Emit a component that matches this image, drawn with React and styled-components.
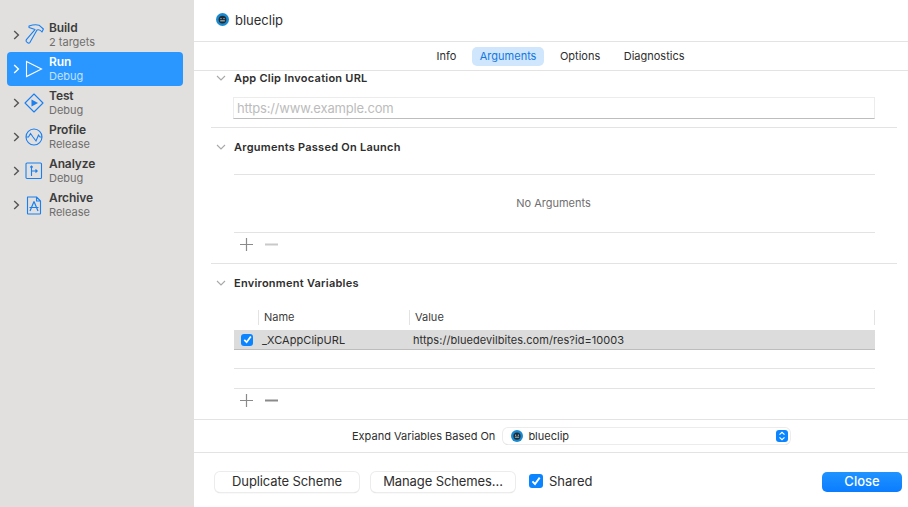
import React from "react";
import styled, { createGlobalStyle } from "styled-components";

const Global = createGlobalStyle`
  html, body { margin: 0; padding: 0; background: #fff; }
  body { font-family: Inter, "Liberation Sans", sans-serif; -webkit-font-smoothing: antialiased; }
  * { box-sizing: border-box; }
`;

const Page = styled.div`
  width: 908px; height: 507px; display: flex; overflow: hidden; background: #fff;
`;
const Sidebar = styled.aside`
  width: 194px; flex: none; background: #e1e0de; padding: 18px 11px 0 7px;
  display: flex; flex-direction: column;
`;
const SchemeRow = styled.div`
  height: 34px; display: flex; align-items: center; border-radius: 4px; padding-left: 6px;
  background: ${p => (p.$active ? "#2997ff" : "transparent")};
  color: ${p => (p.$active ? "#fff" : "#3c3c3c")};
`;
const IconSlot = styled.div`
  width: 20px; height: 20px; margin-left: 4px; margin-right: 5px; display: flex; align-items: center; justify-content: center; flex: none;
`;
const SchemeText = styled.div`
  display: flex; flex-direction: column; gap: 1px; margin-top: -1px;
`;
const SchemeName = styled.span`
  font-size: 12px; line-height: 15px; font-weight: 600; letter-spacing: -0.1px;
`;
const SchemeSub = styled.span`
  font-size: 11px; line-height: 13px; color: ${p => (p.$active ? "#c4e2ff" : "#6f6e6d")};
`;
const Main = styled.main`
  flex: 1; min-width: 0; display: flex; flex-direction: column;
`;
const Header = styled.header`
  height: 42px; border-bottom: 1px solid #e3e3e3; display: flex; align-items: center; padding: 0 0 2px 22px; gap: 6px;
  font-size: 13px; color: #2e2e2e;
`;
const Tabs = styled.nav`
  height: 29px; border-bottom: 1px solid #e3e3e3; display: flex; align-items: center; justify-content: center; gap: 0; padding-left: 19px;
`;
const Tab = styled.div`
  height: 19px; padding: 0 7.5px; margin: 0 4.25px; border-radius: 5px; display: flex; align-items: center; font-size: 11px;
  color: ${p => (p.$active ? "#1377e0" : "#2e2e2e")};
  background: ${p => (p.$active ? "#cfe6fd" : "transparent")};
`;
const Content = styled.div`
  flex: 1; padding: 0 11px 0 17px; display: flex; flex-direction: column;
`;
const Section = styled.section`
  height: ${p => p.$h}px; border-bottom: ${p => (p.$last ? "none" : "1px solid #e3e3e3")};
  display: flex; flex-direction: column; padding-right: 22px;
`;
const SectionHead = styled.div`
  display: flex; align-items: center; height: 14px; margin-top: ${p => p.$top}px; gap: 8px; padding-left: 5px;
  font-size: 11px; font-weight: 600; color: #2e2e2e; letter-spacing: 0.25px;
`;
const Body = styled.div`
  margin-left: 23px; display: flex; flex-direction: column;
`;
const UrlField = styled.div`
  height: 22px; margin-top: 12px; margin-left: -1px; border: 1px solid #ececec; border-bottom: 1px solid #bdbdbd; padding-left: 3px;
  display: flex; align-items: center; font-size: 13px; color: #bcbcbc; letter-spacing: -0.18px;
`;
const EmptyList = styled.div`
  height: 59px; margin-top: 20px; padding: 0 2px 2px 0; border-top: 1px solid #e3e3e3; border-bottom: 1px solid #e3e3e3;
  display: flex; align-items: center; justify-content: center; font-size: 11px; color: #6f6f6f;
`;
const AddRemove = styled.div`
  height: 22px; padding-left: 5px; display: flex; align-items: center; gap: 10px;
`;
const TableHead = styled.div`
  display: flex; height: 22px; margin-top: 18px; padding-bottom: 4px; align-items: center; font-size: 11px; color: #3c3c3c;
`;
const HeadCell = styled.div`
  width: ${p => p.$w}px; height: 15px; padding-left: ${p => (p.$bare ? 0 : 5)}px; line-height: 15px;
  border-left: ${p => (p.$bare ? "none" : "1px solid #e3e3e3")}; flex: ${p => (p.$w ? "none" : 1)};
  border-right: ${p => (p.$end ? "1px solid #e3e3e3" : "none")};
`;
const VarRow = styled.div`
  height: 20px; background: #dcdcdc; border-bottom: 1px solid #bdbdbd; display: flex; align-items: center; font-size: 11px; color: #2e2e2e; letter-spacing: 0.05px; padding-left: 7px;
`;
const BlankRow = styled.div`
  height: ${p => p.$h}px; border-bottom: 1px solid #e3e3e3;
`;
const Check = styled.span`
  width: ${p => p.$s}px; height: ${p => p.$s}px; border-radius: 3px; background: #0a84ff; display: inline-flex; align-items: center; justify-content: center; flex: none;
`;
const VarName = styled.span`
  width: 160px; padding-left: 9px; flex: none;
`;
const ExpandRow = styled.div`
  box-sizing: content-box; height: 32px; border-top: 1px solid #e3e3e3; border-bottom: 1px solid #e3e3e3; display: flex; align-items: center; font-size: 11px; color: #2e2e2e;
  padding-left: 158px; gap: 8px; flex: none;
`;
const Select = styled.div`
  width: 287px; height: 16px; border-radius: 5px; background: #fff; box-shadow: 0 0 0 1px #ececec, 0 1px 0 #bdbdbd;
  display: flex; align-items: center; padding: 0 2px 0 8px; gap: 5px;
`;
const SelectText = styled.span`flex: 1; color: #2e2e2e;`;
const Stepper = styled.span`
  width: 12px; height: 12px; background: #0a84ff; border-radius: 3px; display: flex; align-items: center; justify-content: center;
`;
const Footer = styled.footer`
  flex: 1; display: flex; align-items: center; padding: 4px 6px 0 21px;
`;
const Btn = styled.button`
  height: 20px; width: ${p => p.$w}px; margin-right: ${p => p.$mr || 0}px; border: none; border-radius: 5px; padding: 0 0 2px; font: inherit; font-size: 13px;
  line-height: 18px;
  letter-spacing: ${p => (p.$primary ? "0" : "-0.1px")};
  background: ${p => (p.$primary ? "linear-gradient(#1f94ff,#0a7cff)" : "#fff")};
  color: ${p => (p.$primary ? "#fff" : "#2e2e2e")};
  box-shadow: ${p => (p.$primary ? "none" : "0 0 0 1px #ececec, 0 1px 1px #c4c4c4")};
  ${p => (p.$primary ? "font-weight: 500;" : "")}
`;
const Shared = styled.label`
  display: flex; align-items: center; gap: 6px; font-size: 13px; color: #2e2e2e; flex: 1; padding-bottom: 2px;
`;

const Chevron = ({ light }) => (
  <svg width="7" height="10" viewBox="0 0 7 10" fill="none" stroke={light ? "#fff" : "#555"} strokeWidth="1.4" style={{ flex: "none" }}>
    <path d="M1.2 1 L5.4 5 L1.2 9" />
  </svg>
);
const Down = () => (
  <svg width="10" height="6" viewBox="0 0 10 6" fill="none" stroke="#a8a8a8" strokeWidth="1.1" style={{ flex: "none" }}>
    <path d="M1 1 L5 5 L9 1" />
  </svg>
);
const Tick = ({ s = 9 }) => (
  <svg width={s} height={s} viewBox="0 0 10 10" fill="none" stroke="#fff" strokeWidth="1.9">
    <path d="M1.4 5.4 L4 8 L8.7 1.6" />
  </svg>
);
const Plus = () => (
  <svg width="15" height="15" viewBox="0 0 15 15" stroke="#8a8a8a" strokeWidth="1.2"><path d="M1 7.5 H14 M7.5 1 V14" /></svg>
);
const Minus = ({ on }) => (
  <svg width="15" height="15" viewBox="0 0 15 15" stroke={on ? "#8a8a8a" : "#c9c9c9"} strokeWidth="2"><path d="M1 7.5 H14" /></svg>
);
const Blue = "#1a7ff0";
const Hammer = () => (
  <svg width="20" height="22" viewBox="0 0 20 22" fill="none" stroke={Blue} strokeWidth="1.1" strokeLinejoin="round" style={{ flex: "none" }}>
    <path d="M5 2 Q11 0 15 1.2 L19.4 5 L18 8 Q16 5 13 6 L6 18.3 Q5 19.6 3.6 18.7 L2.6 17.8 Q1.6 16.8 2.6 15.4 L11 5.6 L5 3.4 Z" />
  </svg>
);
const Play = ({ c }) => (
  <svg width="18" height="18" viewBox="0 0 18 18" fill="none" stroke={c} strokeWidth="1.1"><path d="M1.5 1.5 L16.5 9 L1.5 16.5 Z" /></svg>
);
const TestI = () => (
  <svg width="20" height="20" viewBox="0 0 20 20" fill="none" stroke={Blue} strokeWidth="1.1">
    <path d="M10 1 L19 10 L10 19 L1 10 Z" strokeLinejoin="round" />
    <path d="M7.5 6.5 L14 10 L7.5 13.5 Z" fill={Blue} stroke="none" />
  </svg>
);
const ProfileI = () => (
  <svg width="18" height="18" viewBox="0 0 18 18" fill="none" stroke={Blue} strokeWidth="1.1">
    <circle cx="9" cy="9" r="8" /><path d="M1 9 H3.5 L5.5 5.5 L8 9 L11 13 L13.5 7 L15 9 H17" />
  </svg>
);
const AnalyzeI = () => (
  <svg width="18" height="18" viewBox="0 0 18 18" fill="none" stroke={Blue} strokeWidth="1.1">
    <rect x="1" y="1" width="15.5" height="15.5" rx="1" /><path d="M6.5 4 V14 M6.5 9 H12 M10.5 7.5 L12.2 9 L10.5 10.5 M5.2 5.3 L6.5 4 L7.8 5.3" />
  </svg>
);
const ArchiveI = () => (
  <svg width="16" height="19" viewBox="0 0 16 19" fill="none" stroke={Blue} strokeWidth="1.1" strokeLinejoin="round">
    <path d="M1.5 1 H10.5 L14.5 5 V17.5 Q14.5 18 14 18 H2 Q1.5 18 1.5 17.5 Z M10.5 1 V5 H14.5" />
    <path d="M8 5.5 L4 15 M8 5.5 L12 15 M3.5 11.5 H12.5" strokeWidth="1.2" />
  </svg>
);
const AppDot = ({ size = 13 }) => (
  <svg width={size} height={size} viewBox="0 0 13 13" style={{ flex: "none" }}>
    <circle cx="6.5" cy="6.5" r="6.5" fill="#1a8ad0" />
    <circle cx="6.5" cy="6.6" r="3.9" fill="#1d2b36" />
    <circle cx="5" cy="5.6" r="0.7" fill="#bcd" />
    <circle cx="8" cy="5.6" r="0.7" fill="#bcd" />
    <rect x="4.2" y="7.2" width="4.6" height="1.2" fill="#9bb" />
  </svg>
);
const StepArrows = () => (
  <svg width="8" height="10" viewBox="0 0 8 10" fill="none" stroke="#fff" strokeWidth="1.2"><path d="M1.5 3.6 L4 1.4 L6.5 3.6 M1.5 6.4 L4 8.6 L6.5 6.4" /></svg>
);

const schemes = [
  { name: "Build", sub: "2 targets", icon: <Hammer /> },
  { name: "Run", sub: "Debug", active: true, icon: <Play c="#fff" /> },
  { name: "Test", sub: "Debug", icon: <TestI /> },
  { name: "Profile", sub: "Release", icon: <ProfileI /> },
  { name: "Analyze", sub: "Debug", icon: <AnalyzeI /> },
  { name: "Archive", sub: "Release", icon: <ArchiveI /> },
];

export default function App() {
  return (
    <Page>
      <Global />
      <Sidebar>
        {schemes.map(s => (
          <SchemeRow key={s.name} $active={s.active}>
            <Chevron light={s.active} />
            <IconSlot>{s.icon}</IconSlot>
            <SchemeText>
              <SchemeName>{s.name}</SchemeName>
              <SchemeSub $active={s.active}>{s.sub}</SchemeSub>
            </SchemeText>
          </SchemeRow>
        ))}
      </Sidebar>
      <Main>
        <Header><AppDot />blueclip</Header>
        <Tabs>
          <Tab>Info</Tab>
          <Tab $active>Arguments</Tab>
          <Tab>Options</Tab>
          <Tab>Diagnostics</Tab>
        </Tabs>
        <Content>
          <Section $h={57}>
            <SectionHead $top={0}><Down />App Clip Invocation URL</SectionHead>
            <Body><UrlField>https://www.example.com</UrlField></Body>
          </Section>
          <Section $h={136}>
            <SectionHead $top={12}><Down />Arguments Passed On Launch</SectionHead>
            <Body>
              <EmptyList>No Arguments</EmptyList>
              <AddRemove><Plus /><Minus /></AddRemove>
            </Body>
          </Section>
          <Section $h={155} $last>
            <SectionHead $top={12}><Down />Environment Variables</SectionHead>
            <Body>
              <TableHead>
                <HeadCell $w={24} $bare />
                <HeadCell $w={151}>Name</HeadCell>
                <HeadCell $end>Value</HeadCell>
              </TableHead>
              <VarRow>
                <Check $s={12}><Tick /></Check>
                <VarName>_XCAppClipURL</VarName>
                <span>https://bluedevilbites.com/res?id=10003</span>
              </VarRow>
              <BlankRow $h={19} />
              <BlankRow $h={20} />
              <AddRemove><Plus /><Minus on /></AddRemove>
            </Body>
          </Section>
        </Content>
        <ExpandRow>
          Expand Variables Based On
          <Select>
            <AppDot size={12} />
            <SelectText>blueclip</SelectText>
            <Stepper><StepArrows /></Stepper>
          </Select>
        </ExpandRow>
        <Footer>
          <Btn $w={144} $mr={12}>Duplicate Scheme</Btn>
          <Btn $w={144} $mr={14}>Manage Schemes...</Btn>
          <Shared><Check $s={14}><Tick s={10} /></Check>Shared</Shared>
          <Btn $w={80} $primary>Close</Btn>
        </Footer>
      </Main>
    </Page>
  );
}
